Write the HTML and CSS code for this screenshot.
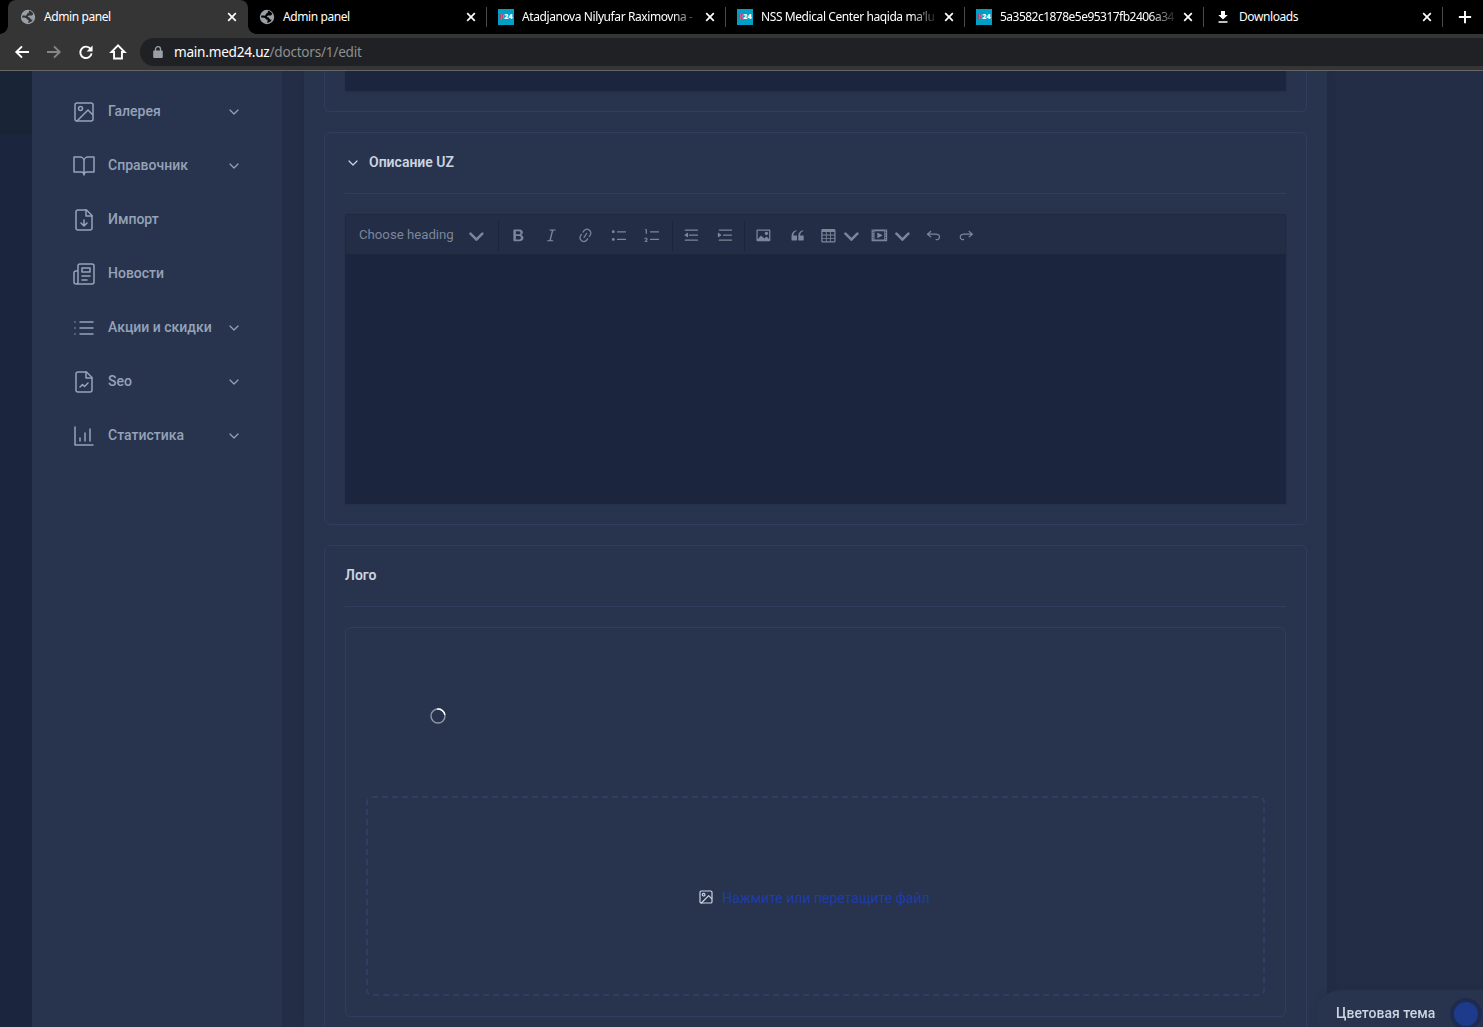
FILE: index.html
```html
<!DOCTYPE html>
<html lang="ru">
<head>
    <meta charset="UTF-8">
    <meta name="viewport" content="width=device-width, initial-scale=1.0">
    <title>Admin panel</title>
    <link rel="stylesheet" href="styles.css">
</head>
<body>
    <!-- shared icons -->
    <svg class="sprite" xmlns="http://www.w3.org/2000/svg">
        <symbol id="chevron" viewBox="0 0 24 24"><path d="m6 9 6 6 6-6"/></symbol>
        <symbol id="image" viewBox="0 0 24 24"><rect x="3" y="3" width="18" height="18" rx="2"/><circle cx="8.5" cy="8.5" r="2"/><path d="m20.4 14.5-4.4-4.5L5 21"/></symbol>
        <symbol id="drop" viewBox="0 0 10 10"><path d="M.941 4.523a.75.75 0 1 1 1.06-1.06l3.006 3.005 3.005-3.005a.75.75 0 1 1 1.06 1.06l-3.549 3.55a.75.75 0 0 1-1.168-.136L.941 4.523z"/></symbol>
        <symbol id="close" viewBox="0 0 16 16"><path d="m4.2 4.2 7.6 7.6M11.8 4.2l-7.6 7.6"/></symbol>
        <symbol id="undo" viewBox="0 0 20 20"><path d="m5.042 9.367 2.189 1.837a.75.75 0 0 1-.965 1.149l-3.788-3.18a.747.747 0 0 1-.21-.284.75.75 0 0 1 .17-.945L6.23 4.762a.75.75 0 1 1 .964 1.15L4.863 7.866h8.917A.75.75 0 0 1 14 7.9a4 4 0 1 1-1.477 7.718l.344-1.489a2.5 2.5 0 1 0 1.094-4.73l.008-.032H5.042z"/></symbol>
    </svg>

    <div class="tabs">
        <div class="tab active">
            <svg class="favicon globe" viewBox="0 0 16 16"><circle cx="8" cy="8" r="7.2"/><path class="land" d="M9 1.6 8.8 3.2Q8.5 4.3 7 4.6L6.6 6Q6 6.8 4.8 6.6L2.4 6.4 2 8.6 5.2 8.8Q6.8 9 6.8 10.2L8.6 11Q8.8 12.2 8 14L9.6 13.6Q10.2 12.8 12 12.2L12.6 10.6Q11.2 11 10.6 9.8 10 8.3 8 8 7.8 6.8 9.2 6.6L12 6.4 13.4 4.8Q12 2.4 9 1.6z"/></svg>
            <span class="tab-title">Admin panel</span>
            <svg class="tab-close"><use href="#close"/></svg>
        </div>
        <div class="tab">
            <svg class="favicon globe dark" viewBox="0 0 16 16"><circle cx="8" cy="8" r="7.2"/><path class="land" d="M9 1.6 8.8 3.2Q8.5 4.3 7 4.6L6.6 6Q6 6.8 4.8 6.6L2.4 6.4 2 8.6 5.2 8.8Q6.8 9 6.8 10.2L8.6 11Q8.8 12.2 8 14L9.6 13.6Q10.2 12.8 12 12.2L12.6 10.6Q11.2 11 10.6 9.8 10 8.3 8 8 7.8 6.8 9.2 6.6L12 6.4 13.4 4.8Q12 2.4 9 1.6z"/></svg>
            <span class="tab-title">Admin panel</span>
            <svg class="tab-close"><use href="#close"/></svg>
        </div>
        <div class="tab">
            <span class="favicon k24"><b>K</b>24</span>
            <span class="tab-title fade">Atadjanova Nilyufar Raximovna -</span>
            <svg class="tab-close"><use href="#close"/></svg>
        </div>
        <div class="tab">
            <span class="favicon k24"><b>K</b>24</span>
            <span class="tab-title fade">NSS Medical Center haqida ma'lu</span>
            <svg class="tab-close"><use href="#close"/></svg>
        </div>
        <div class="tab">
            <span class="favicon k24"><b>K</b>24</span>
            <span class="tab-title fade hash">5a3582c1878e5e95317fb2406a34</span>
            <svg class="tab-close"><use href="#close"/></svg>
        </div>
        <div class="tab">
            <svg class="favicon" viewBox="0 0 16 16"><path fill="#fff" d="M6 2h4v4h2.7L8 10.6 3.3 6H6zM3.5 12.2h9v1.6h-9z"/></svg>
            <span class="tab-title">Downloads</span>
            <svg class="tab-close"><use href="#close"/></svg>
        </div>
        <svg class="new-tab" viewBox="0 0 16 16"><path d="M8 1v14M1 8h14"/></svg>
    </div>

    <div class="toolbar">
        <svg class="nav-icon" viewBox="0 0 16 16"><path d="M16 8H2M8 1.5 1.5 8 8 14.5"/></svg>
        <svg class="nav-icon off" viewBox="0 0 16 16"><path d="M0 8h14M8 1.5 14.5 8 8 14.5"/></svg>
        <svg class="nav-icon" viewBox="0 0 16 16"><path d="M13.2 4.5A6.5 6.5 0 1 0 14.4 9.5"/><path class="solid" d="M15.5.5v6.8H8.7z"/></svg>
        <svg class="nav-icon" viewBox="0 0 16 16"><path d="M8 .5.5 8h3v7.5h9V8h3z"/></svg>
        <div class="omnibox">
            <svg class="lock" viewBox="0 0 10 12"><path d="M1.2 4.5h7.6q1 0 1 1v5.500q0 1-1 1H1.2q-1 0-1-1V5.500q0-1 1-1z"/><path class="shackle" d="M2.5 5V3a2.5 2.3 0 0 1 5 0v2"/></svg>
            <span class="host">main.med24.uz</span><span class="path">/doctors/1/edit</span>
        </div>
    </div>

    <div class="page">
        <div class="edge"></div>

        <nav class="sidebar">
            <a class="menu-item">
                <svg class="icon"><use href="#image"/></svg>
                <span>Галерея</span>
                <svg class="chevron"><use href="#chevron"/></svg>
            </a>
            <a class="menu-item">
                <svg class="icon" viewBox="0 0 24 24"><path d="M2 3h6a4 4 0 0 1 4 4v14a3 3 0 0 0-3-3H2zM22 3h-6a4 4 0 0 0-4 4v14a3 3 0 0 1 3-3h7z"/></svg>
                <span>Справочник</span>
                <svg class="chevron"><use href="#chevron"/></svg>
            </a>
            <a class="menu-item">
                <svg class="icon" viewBox="0 0 24 24"><path d="M14.5 2H6a2 2 0 0 0-2 2v16a2 2 0 0 0 2 2h12a2 2 0 0 0 2-2V7.5L14.5 2z"/><path d="M14 2v6h6M12 18v-6M9 15l3 3 3-3"/></svg>
                <span>Импорт</span>
            </a>
            <a class="menu-item">
                <svg class="icon" viewBox="0 0 24 24"><path d="M4 22h16a2 2 0 0 0 2-2V4a2 2 0 0 0-2-2H8a2 2 0 0 0-2 2v16a2 2 0 0 1-2 2zm0 0a2 2 0 0 1-2-2v-9c0-1.1.9-2 2-2h2M18 14h-8M15 18h-5M10 6h8v4h-8z"/></svg>
                <span>Новости</span>
            </a>
            <a class="menu-item">
                <svg class="icon" viewBox="0 0 24 24"><path d="M8 6h13M8 12h13M8 18h13M3 6h.01M3 12h.01M3 18h.01"/></svg>
                <span>Акции и скидки</span>
                <svg class="chevron"><use href="#chevron"/></svg>
            </a>
            <a class="menu-item">
                <svg class="icon" viewBox="0 0 24 24"><path d="M14.5 2H6a2 2 0 0 0-2 2v16a2 2 0 0 0 2 2h12a2 2 0 0 0 2-2V7.5L14.5 2z"/><path d="M14 2v6h6M16 13l-3.5 3.5-2-2L8 17"/></svg>
                <span>Seo</span>
                <svg class="chevron"><use href="#chevron"/></svg>
            </a>
            <a class="menu-item">
                <svg class="icon" viewBox="0 0 24 24"><path d="M3 3v18h18M13 17V9M18 17V5M8 17v-3"/></svg>
                <span>Статистика</span>
                <svg class="chevron"><use href="#chevron"/></svg>
            </a>
        </nav>

        <main class="content">
            <section class="card card-top">
                <div class="editor-tail"></div>
            </section>

            <section class="card">
                <div class="card-header">
                    <svg class="chevron"><use href="#chevron"/></svg>
                    <span>Описание UZ</span>
                </div>
                <div class="editor">
                    <div class="editor-toolbar">
                        <div class="heading-select"><span>Choose heading</span><svg><use href="#drop"/></svg></div>
                        <i class="sep"></i>
                        <button><svg viewBox="0 0 20 20"><path d="M10.187 17H5.773c-.637 0-1.092-.138-1.364-.415-.273-.277-.409-.718-.409-1.323V4.738c0-.617.14-1.062.419-1.332.279-.27.73-.406 1.354-.406h4.68c.69 0 1.288.041 1.793.124.506.083.96.242 1.36.478.341.197.644.447.906.75a3.262 3.262 0 0 1 .808 2.162c0 1.401-.722 2.426-2.167 3.075C15.05 10.175 16 11.315 16 13.01a3.756 3.756 0 0 1-2.296 3.504 6.1 6.1 0 0 1-1.517.377c-.571.073-1.238.11-2 .11zm-.217-6.217H7v4.087h3.069c1.977 0 2.965-.69 2.965-2.072 0-.707-.256-1.22-.768-1.537-.512-.319-1.277-.478-2.296-.478zM7 5.13v3.619h2.606c.729 0 1.292-.067 1.69-.2a1.6 1.6 0 0 0 .91-.765c.165-.267.247-.566.247-.897 0-.707-.26-1.176-.778-1.409-.519-.232-1.31-.348-2.375-.348H7z"/></svg></button>
                        <button><svg viewBox="0 0 20 20"><path d="m9.586 14.633.021.004c-.036.335.095.655.393.962.082.083.173.15.274.201h1.474a.6.6 0 1 1 0 1.2H5.304a.6.6 0 0 1 0-1.2h1.15c.474-.07.809-.182 1.005-.334.157-.122.291-.32.404-.597l2.416-9.55a1.053 1.053 0 0 0-.281-.823 1.12 1.12 0 0 0-.442-.296H8.15a.6.6 0 0 1 0-1.2h6.443a.6.6 0 1 1 0 1.2h-1.195c-.376.056-.65.155-.823.296-.215.175-.423.439-.623.79l-2.366 9.347z"/></svg></button>
                        <button><svg viewBox="0 0 20 20"><path d="m11.077 15 .991-1.416a.75.75 0 1 1 1.229.86l-1.148 1.64a.748.748 0 0 1-.217.206 5.251 5.251 0 0 1-8.503-5.955.741.741 0 0 1 .12-.274l1.147-1.639a.75.75 0 1 1 1.228.86L4.933 10.7l.006.003a3.75 3.75 0 0 0 6.132 4.294l.006.004zm5.494-5.335a.748.748 0 0 1-.12.274l-1.147 1.639a.75.75 0 1 1-1.228-.86l.86-1.23a3.75 3.75 0 0 0-6.144-4.301l-.86 1.229a.75.75 0 0 1-1.229-.86l1.148-1.64a.748.748 0 0 1 .217-.206 5.251 5.251 0 0 1 8.503 5.955zm-4.563-2.532a.75.75 0 0 1 .184 1.045l-3.155 4.505a.75.75 0 1 1-1.229-.86l3.155-4.506a.75.75 0 0 1 1.045-.184z"/></svg></button>
                        <button><svg viewBox="0 0 20 20"><path d="M7 5.75c0 .414.336.75.75.75h9.5a.75.75 0 1 0 0-1.5h-9.5a.75.75 0 0 0-.75.75zm-6 0C1 4.784 1.777 4 2.75 4c.966 0 1.75.777 1.75 1.75 0 .966-.777 1.75-1.75 1.75C1.784 7.5 1 6.723 1 5.75zm6 9c0 .414.336.75.75.75h9.5a.75.75 0 1 0 0-1.5h-9.5a.75.75 0 0 0-.75.75zm-6 0c0-.966.777-1.75 1.75-1.75.966 0 1.75.777 1.75 1.75 0 .966-.777 1.75-1.75 1.75-.966 0-1.75-.777-1.75-1.75z"/></svg></button>
                        <button><svg viewBox="0 0 20 20"><path d="M7 5.75c0 .414.336.75.75.75h9.5a.75.75 0 1 0 0-1.5h-9.5a.75.75 0 0 0-.75.75zM3.5 3v5H2V3.7H1v-1h2.5V3zM.343 17.857l2.59-3.257H2.92a.6.6 0 1 0-1.04 0H.302a2 2 0 1 1 3.995 0h-.001c-.048.405-.16.734-.333.988-.175.254-.59.692-1.244 1.312H4.3v1h-4l.043-.043zM7 14.75a.75.75 0 0 1 .75-.75h9.5a.75.75 0 1 1 0 1.5h-9.5a.75.75 0 0 1-.75-.75z"/></svg></button>
                        <i class="sep"></i>
                        <button><svg viewBox="0 0 20 20"><path d="M2 3.75c0 .414.336.75.75.75h14.5a.75.75 0 1 0 0-1.5H2.75a.75.75 0 0 0-.75.75zm5 6c0 .414.336.75.75.75h9.5a.75.75 0 1 0 0-1.5h-9.5a.75.75 0 0 0-.75.75zM2.75 16.5h14.5a.75.75 0 1 0 0-1.5H2.75a.75.75 0 1 0 0 1.5zM5.368 6.95 1.98 9.358a.4.4 0 0 0 .013.661l3.39 2.207A.4.4 0 0 0 6 11.892V7.275a.4.4 0 0 0-.632-.326z"/></svg></button>
                        <button><svg viewBox="0 0 20 20"><path d="M2 3.75c0 .414.336.75.75.75h14.5a.75.75 0 1 0 0-1.5H2.75a.75.75 0 0 0-.75.75zm5 6c0 .414.336.75.75.75h9.5a.75.75 0 1 0 0-1.5h-9.5a.75.75 0 0 0-.75.75zM2.75 16.5h14.5a.75.75 0 1 0 0-1.5H2.75a.75.75 0 1 0 0 1.5zM1.632 6.95 5.02 9.358a.4.4 0 0 1-.013.661l-3.39 2.207A.4.4 0 0 1 1 11.892V7.275a.4.4 0 0 1 .632-.326z"/></svg></button>
                        <i class="sep"></i>
                        <button><svg viewBox="0 0 20 20"><path d="M6.91 10.54c.26-.23.64-.21.88.03l3.36 3.14 2.23-2.06a.64.64 0 0 1 .87 0l2.52 2.97V4.5H3.2v10.12l3.71-4.08zm10.27-7.51c.6 0 1.09.47 1.09 1.05v11.84c0 .59-.49 1.06-1.09 1.06H2.79c-.6 0-1.09-.47-1.09-1.06V4.08c0-.58.49-1.05 1.1-1.05h14.38zm-5.22 5.56a1.96 1.96 0 1 1 3.4-1.96 1.96 1.96 0 0 1-3.4 1.96z"/></svg></button>
                        <button><svg viewBox="0 0 20 20"><path d="M3 10.423a6.5 6.5 0 0 1 6.056-6.408l.038.67C6.448 5.423 5.354 7.663 5.22 10H9c.552 0 .5.432.5.986v4.511c0 .554-.448.503-1 .503h-5c-.552 0-.5-.449-.5-1.003v-4.574zm8 0a6.5 6.5 0 0 1 6.056-6.408l.038.67c-2.646.739-3.74 2.979-3.873 5.315H17c.552 0 .5.432.5.986v4.511c0 .554-.448.503-1 .503h-5c-.552 0-.5-.449-.5-1.003v-4.574z"/></svg></button>
                        <button class="split"><svg viewBox="0 0 20 20"><path d="M3 6v3h4V6H3zm0 4v3h4v-3H3zm0 4v3h4v-3H3zm5 3h4v-3H8v3zm5 0h4v-3h-4v3zm4-4v-3h-4v3h4zm0-4V6h-4v3h4zm1.5 8a1.5 1.5 0 0 1-1.5 1.5H3A1.5 1.5 0 0 1 1.5 17V4c.222-.863 1.068-1.5 2-1.5h13c.932 0 1.778.637 2 1.5v13zM12 13v-3H8v3h4zm0-4V6H8v3h4z"/></svg><svg><use href="#drop"/></svg></button>
                        <button class="split"><svg viewBox="0 0 20 20"><path d="M18.68 3.03c.6 0 .59-.03.59.55v12.84c0 .59.01.56-.59.56H1.29c-.6 0-.59.03-.59-.56V3.58c0-.58-.01-.55.6-.55h17.38zM15.77 15V5H4.2v10h11.57zM2 4v1h1V4H2zm0 2v1h1V6H2zm0 2v1h1V8H2zm0 2v1h1v-1H2zm0 2v1h1v-1H2zm0 2v1h1v-1H2zM17 4v1h1V4h-1zm0 2v1h1V6h-1zm0 2v1h1V8h-1zm0 2v1h1v-1h-1zm0 2v1h1v-1h-1zm0 2v1h1v-1h-1zM7.5 7.177a.4.4 0 0 1 .593-.351l5.133 2.824a.4.4 0 0 1 0 .7l-5.133 2.824a.4.4 0 0 1-.593-.35z"/></svg><svg><use href="#drop"/></svg></button>
                        <button><svg><use href="#undo"/></svg></button>
                        <button><svg class="flip"><use href="#undo"/></svg></button>
                    </div>
                    <div class="editor-body"></div>
                </div>
            </section>

            <section class="card">
                <div class="card-header"><span>Лого</span></div>
                <div class="upload">
                    <div class="preview">
                        <svg class="spinner" viewBox="0 0 16 16"><circle cx="8" cy="8" r="7"/><path d="M7 1.100a7 7 0 0 1 7.900 5.700"/></svg>
                    </div>
                    <div class="dropzone">
                        <svg class="chevron"><use href="#image"/></svg>
                        <span>Нажмите или перетащите файл</span>
                    </div>
                </div>
            </section>
        </main>
    </div>

    <div class="theme-switcher">
        <span>Цветовая тема</span>
        <i class="theme-color"></i>
    </div>
</body>
</html>
```
FILE: styles.css
```css
* {
    box-sizing: border-box;
}
body {
    margin: 0;
    height: 1027px;
    overflow: hidden;
    background: #232d45;
    color: #cbd5e1;
    font-family: Roboto, sans-serif;
    font-size: 14px;
    line-height: 20px;
}
svg {
    flex: none;
    display: block;
}
.sprite {
    position: absolute;
    width: 0;
    height: 0;
}

/* browser chrome */
.tabs {
    display: flex;
    height: 34px;
    padding-left: 8px;
    background: #000;
    font-family: "Noto Sans", sans-serif;
    font-size: 12px;
    color: #fff;
}
.tab {
    position: relative;
    display: flex;
    align-items: center;
    width: 239px;
    padding: 0 7px 0 12px;
}
.tab::after {
    content: "";
    position: absolute;
    right: -1px;
    top: 7px;
    width: 1px;
    height: 20px;
    background: #4a4a4a;
}
.tab.active {
    width: 240px;
    margin-right: -1px;
    background: #353535;
    border-radius: 8px 8px 0 0;
    z-index: 1;
}
.tab.active::before,
.tab.active::after {
    content: "";
    position: absolute;
    top: auto;
    bottom: 0;
    width: 8px;
    height: 8px;
}
.tab.active::before {
    left: -8px;
    background: radial-gradient(circle at 0 0, #000 7.5px, #353535 8px);
}
.tab.active::after {
    right: -8px;
    background: radial-gradient(circle at 100% 0, #000 7.5px, #353535 8px);
}
.favicon {
    width: 16px;
    height: 16px;
    margin-right: 8px;
    flex: none;
}
.globe {
    fill: #9aa0a6;
}
.land {
    fill: #353535;
}
.dark .land {
    fill: #000;
}
.k24 {
    background: #00a0c6;
    font: 800 7px/16px "Open Sans", sans-serif;
    text-align: center;
    white-space: nowrap;
}
.k24 b {
    color: #e8456b;
    font-weight: 800;
}
.tab-title {
    flex: none;
    width: 175px;
    white-space: nowrap;
    letter-spacing: -0.41px;
}
.hash {
    letter-spacing: -0.52px;
}
.fade {
    -webkit-mask-image: linear-gradient(90deg, #000 150px, transparent 178px);
    mask-image: linear-gradient(90deg, #000 150px, transparent 178px);
}
.tab-close {
    width: 16px;
    height: 16px;
    margin-left: 5px;
    fill: none;
    stroke: #fff;
    stroke-width: 1.7;
}
.new-tab {
    width: 14px;
    height: 14px;
    margin: 10px 0 0 16px;
    stroke: #fff;
    stroke-width: 2.2;
}
.toolbar {
    display: flex;
    align-items: center;
    gap: 18px;
    height: 37px;
    padding-left: 15px;
    background: #353535;
    border-bottom: 1px solid #666;
}
.nav-icon {
    width: 14px;
    height: 14px;
    overflow: visible;
    fill: none;
    stroke: #fff;
    stroke-width: 2.2;
}
.nav-icon.off {
    stroke: #868686;
}
.nav-icon .solid {
    fill: #fff;
    stroke: none;
}
.omnibox {
    display: flex;
    align-items: center;
    flex: 1;
    height: 28px;
    margin-left: -3px;
    padding-left: 13px;
    border-radius: 14px 0 0 14px;
    background: #202124;
    font-family: "Noto Sans", sans-serif;
    font-size: 13.6px;
    letter-spacing: -0.24px;
}
.lock {
    width: 10px;
    height: 12px;
    margin-right: 11px;
    fill: #9aa0a6;
}
.lock .shackle {
    fill: none;
    stroke: #9aa0a6;
    stroke-width: 1.3;
}
.host {
    color: #fff;
}
.path {
    color: #8d8f92;
}

/* layout */
.page {
    display: flex;
    height: 956px;
    overflow: hidden;
}
.edge {
    width: 32px;
    background: linear-gradient(#1a2437 62px, #1b253d 66px);
}
.sidebar {
    width: 250px;
    padding: 14px 40px 0;
    background: #28334e;
    color: #94a3b8;
}
.menu-item {
    display: flex;
    align-items: center;
    height: 54px;
}
.menu-item span {
    flex: 1;
    margin-left: 12px;
    padding-bottom: 2px;
    white-space: nowrap;
    font-weight: 500;
}
.icon,
.chevron {
    fill: none;
    stroke: currentColor;
    stroke-width: 1.5;
    stroke-linecap: round;
    stroke-linejoin: round;
}
.icon {
    width: 24px;
    height: 24px;
}
.chevron {
    width: 16px;
    height: 16px;
    stroke-width: 1.8;
}
.content {
    display: flex;
    flex-direction: column;
    gap: 20px;
    width: 1023px;
    margin-left: 22px;
    padding: 0 20px;
    background: #28334e;
    box-shadow: 3px 0 6px #1f29403d;
}
.card {
    flex: none;
    padding: 20px;
    border: 1px solid #303d5f;
    border-radius: 6px;
}
.card-top {
    padding-top: 0;
    border-top: 0;
    border-radius: 0 0 6px 6px;
}
.editor-tail {
    height: 20px;
    background: #1b253d;
    border: 1px solid #1c273b;
    border-top: 0;
    border-radius: 0 0 2px 2px;
    box-shadow: 0 1px 2px #1f294055;
}
.card-header {
    display: flex;
    align-items: center;
    height: 41px;
    padding-bottom: 20px;
    margin-bottom: 20px;
    border-bottom: 1px solid #303d5f;
    font-weight: 600;
}
.card-header .chevron {
    margin-right: 8px;
}
.card-header span {
    padding-bottom: 2px;
}

/* editor */
.editor {
    border-radius: 2px;
    overflow: hidden;
    box-shadow: 0 1px 2px #1f294055;
}
.editor-toolbar {
    display: flex;
    align-items: center;
    height: 40px;
    padding-top: 1px;
    background: #232d45;
    border: 1px solid #1f2a40;
    border-bottom: 0;
    color: #7c869a;
}
.editor-toolbar svg {
    width: 16.8px;
    height: 16.8px;
    fill: currentColor;
}
.editor-toolbar button {
    display: flex;
    align-items: center;
    justify-content: center;
    width: 33.6px;
    height: 33px;
    padding: 0;
    border: 0;
    background: none;
    color: inherit;
}
.editor-toolbar .split {
    width: 51px;
    gap: 6px;
}
.heading-select {
    display: flex;
    align-items: center;
    justify-content: space-between;
    width: 152px;
    padding: 0 13px;
    font-size: 13.2px;
}
.heading-select span {
    margin-top: -1px;
}
.sep {
    width: 1px;
    height: 31px;
    margin: 0 1.8px 0 2.4px;
    background: #1b253d;
}
.heading-select + .sep {
    margin: 0 2.4px 0 0;
}
.editor-body {
    height: 250px;
    background: #1b253d;
    border: 1px solid #1c273b;
}
.flip {
    transform: scaleX(-1);
}

/* upload */
.upload {
    height: 390px;
    padding: 20px;
    border: 1px solid #303d5f;
    border-radius: 6px;
}
.preview {
    display: flex;
    align-items: center;
    justify-content: center;
    width: 144px;
    height: 136px;
    margin-bottom: 12px;
}
.spinner {
    width: 16px;
    height: 16px;
    fill: none;
    stroke: #8f97a6;
    stroke-width: 1.4;
}
.spinner path {
    stroke: #fff;
}
.dropzone {
    display: flex;
    align-items: center;
    justify-content: center;
    height: 200px;
    padding: 2px 3px 0 0;
    border: 2px dashed #313e61;
    border-radius: 6px;
    color: #1e3da8;
}
.dropzone .chevron {
    margin-right: 8px;
    color: #cbd5e1;
}
.dropzone span {
    padding-top: 2px;
}

.theme-switcher {
    position: fixed;
    right: 0;
    bottom: -13px;
    display: flex;
    align-items: center;
    justify-content: space-between;
    width: 167px;
    height: 50px;
    padding: 0 1px 2px 20px;
    border-radius: 25px 0 0 25px;
    background: #28334e;
    box-shadow: 0 0 6px #232d4566;
    font-weight: 500;
    white-space: nowrap;
}
.theme-switcher span {
    padding-bottom: 2px;
}
.theme-color {
    width: 32px;
    height: 32px;
    border: 4px solid #1e2b50;
    border-radius: 50%;
    background: #1e3a8a;
}
```
